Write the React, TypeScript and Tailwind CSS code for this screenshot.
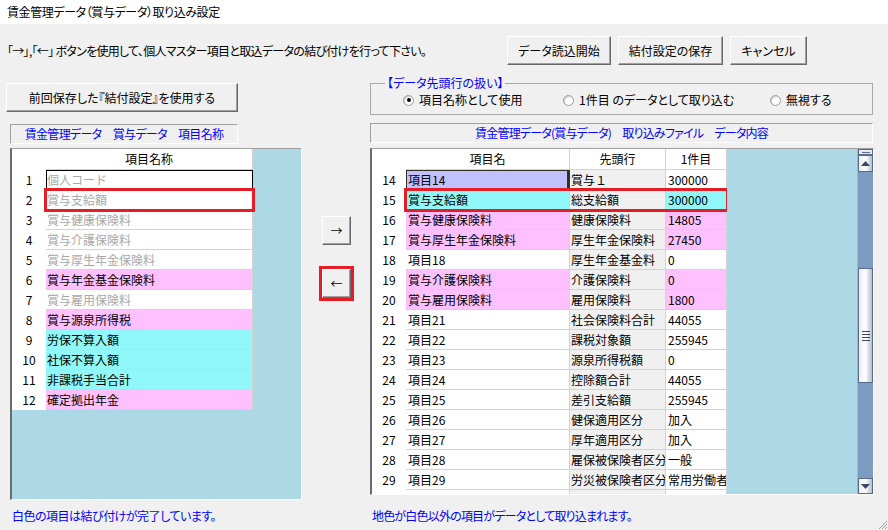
import React from "react";

// 賞与データ取り込み設定画面 (Windows フォーム風)

const FONT = "font-['Noto_Sans_CJK_JP','Noto_Sans',sans-serif]";
const PALT = "[font-feature-settings:'palt']";

type LeftRow = { name: string; bg: string; gray?: boolean; extra?: string };

const leftRows: LeftRow[] = [
    { name: "個人コード", bg: "bg-white", gray: true, extra: "outline outline-1 outline-black outline-offset-[-1px]" },
    { name: "賞与支給額", bg: "bg-white", gray: true, extra: "outline-[3px] outline-solid outline-[#e41e26] outline-offset-[-1px] relative z-10" },
    { name: "賞与健康保険料", bg: "bg-white", gray: true },
    { name: "賞与介護保険料", bg: "bg-white", gray: true },
    { name: "賞与厚生年金保険料", bg: "bg-white", gray: true },
    { name: "賞与年金基金保険料", bg: "bg-[#ffc0ff]" },
    { name: "賞与雇用保険料", bg: "bg-white", gray: true },
    { name: "賞与源泉所得税", bg: "bg-[#ffc0ff]" },
    { name: "労保不算入額", bg: "bg-[#90f8f8]" },
    { name: "社保不算入額", bg: "bg-[#90f8f8]" },
    { name: "非課税手当合計", bg: "bg-[#90f8f8]" },
    { name: "確定拠出年金", bg: "bg-[#ffc0ff]" },
];

type RightRow = { no: number; name: string; nameBg: string; head: string; val: string; valBg: string };

const rightRows: RightRow[] = [
    { no: 14, name: "項目14", nameBg: "bg-[#c0c0ff]", head: "賞与１", val: "300000", valBg: "bg-white" },
    { no: 15, name: "賞与支給額", nameBg: "bg-[#90f8f8]", head: "総支給額", val: "300000", valBg: "bg-[#90f8f8]" },
    { no: 16, name: "賞与健康保険料", nameBg: "bg-[#ffc0ff]", head: "健康保険料", val: "14805", valBg: "bg-[#ffc0ff]" },
    { no: 17, name: "賞与厚生年金保険料", nameBg: "bg-[#ffc0ff]", head: "厚生年金保険料", val: "27450", valBg: "bg-[#ffc0ff]" },
    { no: 18, name: "項目18", nameBg: "bg-white", head: "厚生年金基金料", val: "0", valBg: "bg-white" },
    { no: 19, name: "賞与介護保険料", nameBg: "bg-[#ffc0ff]", head: "介護保険料", val: "0", valBg: "bg-[#ffc0ff]" },
    { no: 20, name: "賞与雇用保険料", nameBg: "bg-[#ffc0ff]", head: "雇用保険料", val: "1800", valBg: "bg-[#ffc0ff]" },
    { no: 21, name: "項目21", nameBg: "bg-white", head: "社会保険料合計", val: "44055", valBg: "bg-white" },
    { no: 22, name: "項目22", nameBg: "bg-white", head: "課税対象額", val: "255945", valBg: "bg-white" },
    { no: 23, name: "項目23", nameBg: "bg-white", head: "源泉所得税額", val: "0", valBg: "bg-white" },
    { no: 24, name: "項目24", nameBg: "bg-white", head: "控除額合計", val: "44055", valBg: "bg-white" },
    { no: 25, name: "項目25", nameBg: "bg-white", head: "差引支給額", val: "255945", valBg: "bg-white" },
    { no: 26, name: "項目26", nameBg: "bg-white", head: "健保適用区分", val: "加入", valBg: "bg-white" },
    { no: 27, name: "項目27", nameBg: "bg-white", head: "厚年適用区分", val: "加入", valBg: "bg-white" },
    { no: 28, name: "項目28", nameBg: "bg-white", head: "雇保被保険者区分", val: "一般", valBg: "bg-white" },
    { no: 29, name: "項目29", nameBg: "bg-white", head: "労災被保険者区分", val: "常用労働者", valBg: "bg-white" },
    { no: 30, name: "項目30", nameBg: "bg-white", head: "労保算定対象区分", val: "1", valBg: "bg-white" },
];

const btn =
    "h-[29px] bg-[#f0f0f0] border border-t-white border-l-white border-r-[#696969] border-b-[#696969] shadow-[inset_-1px_-1px_0_#a0a0a0] text-[12px] leading-none flex items-center justify-center";

function Radio({ checked, label, className }: { checked?: boolean; label: string; className?: string }) {
    return (
        <div className={`flex items-center ${className ?? ""}`}>
            <span className="w-[11px] h-[11px] rounded-full border border-[#9a9a9a] bg-white flex items-center justify-center shadow-[inset_1px_1px_0_#d0d0d0]">
                {checked && <span className="w-[4px] h-[4px] rounded-full bg-black" />}
            </span>
            <span className="ml-[5px]">{label}</span>
        </div>
    );
}

function ScrollBar() {
    return (
        <div className="w-[16px] h-full flex flex-col bg-[#7b9bc0] border-l border-[#9fb4d0]">
            <div className="h-[6px] bg-[#e4e8f0] border border-[#5a6a8c] flex items-center justify-center">
                <span className="w-[8px] h-[1px] bg-[#5a6a8c]" />
            </div>
            <div className="h-[17px] border border-[#5a6a8c] bg-gradient-to-r from-[#e8ecf4] via-white to-[#b4bed2] flex items-center justify-center">
                <svg width="9" height="5" viewBox="0 0 9 5"><polygon points="4.5,0 9,5 0,5" fill="#3c4664" /></svg>
            </div>
            <div className="h-[96px]" />
            <div className="h-[115px] border border-[#5a6a8c] bg-gradient-to-r from-[#e8ecf4] via-white to-[#b4bed2] flex items-end justify-center pb-[41px]">
                <div className="flex flex-col gap-[2px]">
                    <span className="w-[8px] h-[1px] bg-[#3c4664]" />
                    <span className="w-[8px] h-[1px] bg-[#3c4664]" />
                    <span className="w-[8px] h-[1px] bg-[#3c4664]" />
                    <span className="w-[8px] h-[1px] bg-[#3c4664]" />
                </div>
            </div>
            <div className="flex-1" />
            <div className="h-[16px] border border-[#5a6a8c] bg-gradient-to-r from-[#e8ecf4] via-white to-[#b4bed2] flex items-center justify-center">
                <svg width="9" height="5" viewBox="0 0 9 5"><polygon points="0,0 9,0 4.5,5" fill="#3c4664" /></svg>
            </div>
        </div>
    );
}

export default function App() {
    return (
        <div className={`w-[888px] h-[530px] bg-[#f0f0f0] text-[12px] leading-none text-black relative overflow-hidden ${FONT}`}>
            {/* title */}
            <div className={`h-[24px] bg-white flex items-center pl-[7px] tracking-[-0.4px] ${PALT}`}>賃金管理データ（賞与データ）取り込み設定</div>

            {/* instruction + buttons */}
            <div className="mt-[12px] h-[29px] flex items-center">
                <div className={`w-[507px] pl-[7px] tracking-[-0.7px] ${PALT}`}>「→」,「←」 ボタンを使用して、個人マスター項目と取込データの結び付けを行って下さい。</div>
                <button className={`${btn} w-[104px] ${PALT}`}>データ読込開始</button>
                <button className={`${btn} w-[105px] ml-[7px] ${PALT}`}>結付設定の保存</button>
                <button className={`${btn} w-[77px] ml-[7px] ${PALT}`}>キャンセル</button>
            </div>

            <div className="flex">
                {/* left column */}
                <div className="w-[302px] pl-[6px] pt-[18px]">
                    <button className={`${btn} w-[232px] ${PALT}`}>前回保存した『結付設定』を使用する</button>
                    <div className={`mt-[12px] ml-[4px] w-[228px] h-[20px] border border-t-[#a0a0a0] border-l-[#a0a0a0] border-r-white border-b-white flex items-center justify-center text-[#0000ff] tracking-[-0.7px] ${PALT}`}>
                        賃金管理データ　賞与データ　項目名称
                    </div>
                    <div className="mt-[4px] ml-[4px] w-[292px] h-[352px] bg-[#add8e6] border-l-2 border-l-[#6b6b6b] border-t border-t-[#a0a0a0] border-r border-r-white border-b border-b-white">
                        <div className="flex h-[21px]">
                            <div className="w-[34px] bg-white" />
                            <div className="w-[207px] bg-white border-r border-b border-[#d3d3d3] flex items-center justify-center">項目名称</div>
                        </div>
                        {leftRows.map((r, i) => (
                            <div key={i} className="flex h-[20px]">
                                <div className="w-[34px] bg-white flex items-center justify-center">{i + 1}</div>
                                <div className={`w-[207px] ${r.bg} border-r border-b border-[#d3d3d3] flex items-center pl-[1px] ${r.gray ? "text-[#a8a8a8]" : ""} ${r.extra ?? ""}`}>
                                    {r.name}
                                </div>
                            </div>
                        ))}
                    </div>
                    <div className={`mt-[10px] ml-[6px] text-[#0000ff] tracking-[-0.5px] ${PALT}`}>白色の項目は結び付けが完了しています。</div>
                </div>

                {/* arrow buttons */}
                <div className="w-[68px] pl-[20px] pt-[151px]">
                    <button className={`${btn} w-[29px] h-[28px]`}>→</button>
                    <button className={`${btn} w-[29px] h-[27px] mt-[24px] outline-[3px] outline-solid outline-[#e41e26]`}>←</button>
                </div>

                {/* right column */}
                <div className="w-[504px] pt-[12px]">
                    <fieldset className="w-[503px] border border-[#a8a8a8] pb-[3px]">
                        <legend className={`ml-[14px] px-[2px] text-[#0000ff] ${PALT}`}>【データ先頭行の扱い】</legend>
                        <div className={`h-[22px] flex items-center pl-[32px] ${PALT}`}>
                            <Radio checked label="項目名称として使用" className="w-[160px]" />
                            <Radio label="1件目 のデータとして取り込む" className="w-[207px]" />
                            <Radio label="無視する" />
                        </div>
                    </fieldset>
                    <div className={`mt-[8px] w-[503px] h-[20px] border border-t-[#a0a0a0] border-l-[#a0a0a0] border-r-white border-b-white flex items-center justify-center text-[#0000ff] tracking-[-0.8px] ${PALT}`}>
                        賃金管理データ(賞与データ)　取り込みファイル　データ内容
                    </div>
                    <div className="mt-[5px] w-[504px] h-[347px] bg-[#add8e6] border-l-2 border-l-[#6b6b6b] border-t border-t-[#a0a0a0] border-r border-r-white border-b border-b-white flex">
                        <div className="w-[355px] h-full overflow-hidden">
                            <div className="flex h-[21px]">
                                <div className="w-[34px] bg-white" />
                                <div className="w-[164px] bg-white border-r border-b border-[#d3d3d3] flex items-center justify-center">項目名</div>
                                <div className="w-[96px] bg-white border-r border-b border-[#d3d3d3] flex items-center justify-center">先頭行</div>
                                <div className="w-[61px] bg-white border-r border-b border-[#d3d3d3] flex items-center justify-center">1件目</div>
                            </div>
                            {rightRows.map((r) => (
                                <div key={r.no} className="flex h-[20px]">
                                    <div className="w-[34px] bg-white flex items-center justify-center">{r.no}</div>
                                    <div className={`flex ${r.no === 15 ? "relative z-10 outline-[3px] outline-solid outline-[#e41e26] outline-offset-[-1px]" : ""}`}>
                                        <div className={`w-[164px] ${r.nameBg} border-r border-b border-[#d3d3d3] flex items-center pl-[2px] whitespace-nowrap ${r.no === 14 ? "outline outline-1 outline-[#303020] outline-offset-[-1px] shadow-[inset_-2px_0_0_#303020]" : ""}`}>
                                            {r.name}
                                        </div>
                                        <div className="w-[96px] bg-[#f0f0f0] border-r border-b border-[#d3d3d3] flex items-center pl-[1px] whitespace-nowrap overflow-hidden">{r.head}</div>
                                        <div className={`w-[61px] ${r.valBg} border-r border-b border-[#d3d3d3] flex items-center pl-[2px] whitespace-nowrap overflow-hidden`}>{r.val}</div>
                                    </div>
                                </div>
                            ))}
                        </div>
                        <div className="flex-1" />
                        <ScrollBar />
                    </div>
                    <div className={`mt-[15px] ml-[2px] text-[#0000ff] tracking-[-0.8px] ${PALT}`}>地色が白色以外の項目がデータとして取り込まれます。</div>
                </div>
            </div>

            {/* size grip */}
            <svg className="absolute right-0 bottom-0" width="11" height="11" viewBox="0 0 11 11">
                <line x1="10" y1="2" x2="2" y2="10" stroke="#a0a0a0" />
                <line x1="10" y1="5" x2="5" y2="10" stroke="#a0a0a0" />
                <line x1="10" y1="8" x2="8" y2="10" stroke="#a0a0a0" />
            </svg>
        </div>
    );
}
